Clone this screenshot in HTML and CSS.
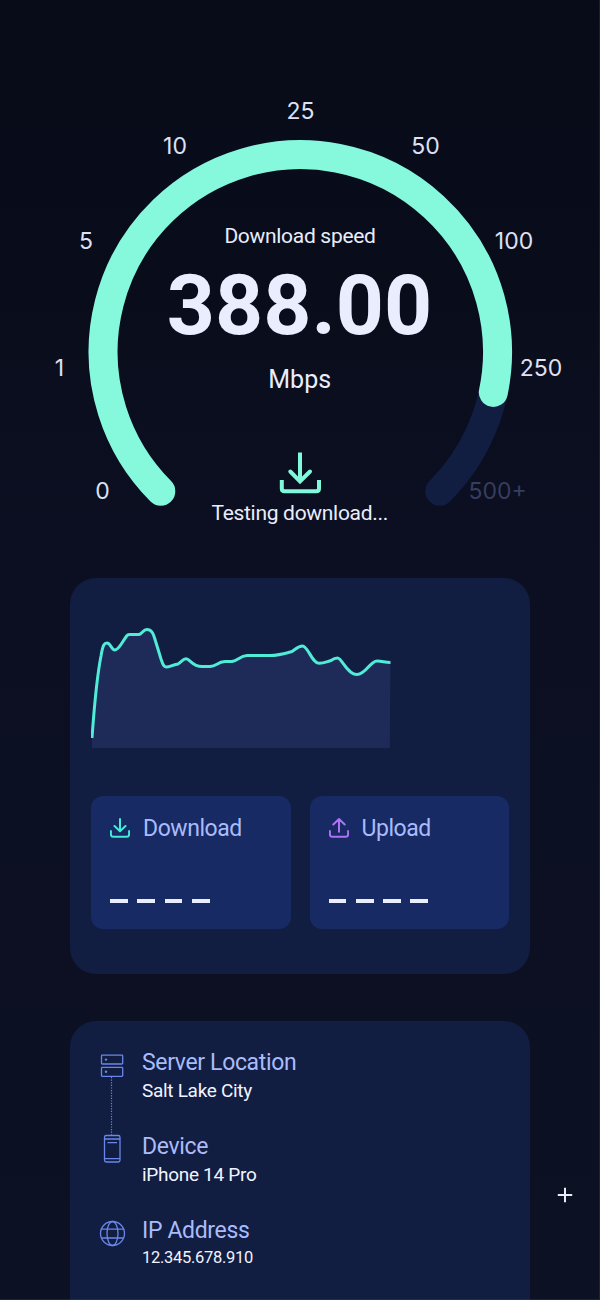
FILE: index.html
```html
<!DOCTYPE html>
<html lang="en">
<head>
<meta charset="utf-8">
<title>Speed test</title>
<link rel="stylesheet" href="styles.css">
</head>
<body>
<main class="screen">
  <svg class="gauge" width="600" height="578" viewBox="0 0 600 578">
    <path class="arc track" d="M160.8 491.2A197.2 197.2 0 1 1 439.8 491.2"/>
    <path class="arc value" d="M160.8 491.2A197.2 197.2 0 1 1 493.3 392.4"/>
    <g class="ticks">
      <text x="102.5" y="498.5">0</text>
      <text x="59.5" y="375.8">1</text>
      <text x="86" y="248.7">5</text>
      <text x="175" y="153.8">10</text>
      <text x="300.5" y="119">25</text>
      <text x="425.5" y="153.8">50</text>
      <text x="514" y="248.7">100</text>
      <text x="541" y="375.8">250</text>
      <text class="off" x="497.7" y="498.5">500+</text>
    </g>
    <text class="caption" x="300" y="242.5">Download speed</text>
    <text class="speed" x="299.5" y="334.2">388.00</text>
    <text class="unit" x="299.7" y="387.8">Mbps</text>
    <g class="gauge-icon">
      <path d="M300 452.5V482M281.8 480V488.5Q281.8 491.3 284.6 491.3H316.2Q319 491.3 319 488.5V480"/>
      <path class="head" d="M290.300 471.500L300 481.500L310 471.500"/>
    </g>
    <text class="caption" x="299.7" y="520.3">Testing download...</text>
  </svg>

  <section class="card results">
    <svg class="chart" width="418" height="170" viewBox="91 578 418 170">
      <path class="area" d="M92 748V737C94 710 97 676 101 656C103 644 104.5 643 107 643C111 643 111 650 115 650C119 650 122 642 127 635.500Q128 634.500 130 634.500H139C142 634 143 629.500 147 629.500C151 629.500 153 632 155.500 641L161 659C163 665 164 667 166 667C170 667 171 665.500 178 664C181 662.500 183 658.700 186 658.700C190 658.700 192 666.600 202 666.600H210C217 666 217 662 225 661.500H232C238 660.500 240 655.800 247 655.600H270C278 655.600 285 653.500 292 651.500C296 649 298 646 302.500 646C308 646 312 663.300 319 663.300C324 663.300 326 662 331 660.500C333 659 334.500 658 337.500 658C342 658 347 674.500 357 674.500C366 674.500 370 661 377 661C383 661 384 662.500 390.500 662.500L389.800 748Z"/>
      <path class="line" d="M92 738C94 710 97 676 101 656C103 644 104.500 643 107 643C111 643 111 650 115 650C119 650 122 642 127 635.500Q128 634.500 130 634.500H139C142 634 143 629.500 147 629.500C151 629.500 153 632 155.500 641L161 659C163 665 164 667 166 667C170 667 171 665.500 178 664C181 662.500 183 658.700 186 658.700C190 658.700 192 666.600 202 666.600H210C217 666 217 662 225 661.500H232C238 660.500 240 655.800 247 655.600H270C278 655.600 285 653.500 292 651.500C296 649 298 646 302.500 646C308 646 312 663.300 319 663.300C324 663.300 326 662 331 660.500C333 659 334.500 658 337.500 658C342 658 347 674.500 357 674.500C366 674.500 370 661 377 661C383 661 384 662.500 390.500 662.500"/>
    </svg>
    <div class="tiles">
      <div class="tile">
        <div class="tile-head">
          <svg class="tile-icon down" width="20" height="20" viewBox="0 0 20 20"><path d="M10 1V12.500M4.500 8L10 13.300L15.500 8M.9 13V16.500Q.9 18.800 3.200 18.800H16.800Q19.100 18.800 19.100 16.500V13"/></svg>
          <span>Download</span>
        </div>
        <div class="dashes"><i></i><i></i><i></i><i></i></div>
      </div>
      <div class="tile">
        <div class="tile-head">
          <svg class="tile-icon up" width="20" height="20" viewBox="0 0 20 20"><path d="M10 13.800V1.500M4.300 6.500L10 1.100L15.700 6.500M.9 13V16.500Q.9 18.800 3.200 18.800H16.800Q19.100 18.800 19.100 16.500V13"/></svg>
          <span>Upload</span>
        </div>
        <div class="dashes"><i></i><i></i><i></i><i></i></div>
      </div>
    </div>
  </section>

  <section class="card details">
    <svg class="detail-icons" width="28" height="200" viewBox="98 1050 28 200">
      <rect x="101.500" y="1055.200" width="21.200" height="8.800" rx=".8"/>
      <rect x="101.500" y="1067.300" width="21.200" height="9" rx=".8"/>
      <circle class="dot" cx="106" cy="1059.600" r="1.200"/>
      <circle class="dot" cx="106" cy="1071.700" r="1.200"/>
      <path class="link" d="M111.500 1077V1135"/>
      <rect x="104.500" y="1135.500" width="15.500" height="26.500" rx="1.800"/>
      <path d="M104.500 1139H120M104.500 1158.700H120M107.500 1142.600H117"/>
      <circle cx="112.500" cy="1233.500" r="12"/>
      <ellipse cx="112.500" cy="1233.500" rx="5.500" ry="12"/>
      <path d="M101.500 1229.200H123.500M101.500 1238H123.500"/>
    </svg>
    <dl class="detail-list">
      <div><dt>Server Location</dt><dd>Salt Lake City</dd></div>
      <div><dt>Device</dt><dd>iPhone 14 Pro</dd></div>
      <div><dt>IP Address</dt><dd class="ip">12.345.678.910</dd></div>
    </dl>
  </section>
  <svg class="plus" width="16" height="16" viewBox="0 0 16 16"><path d="M8 .8V15.200M.8 8H15.200"/></svg>
</main>
</body>
</html>
```
FILE: styles.css
```css
* { box-sizing: border-box; }
body { margin: 0; font-family: Roboto, sans-serif; }
.screen {
  position: relative;
  width: 600px;
  height: 1300px;
  overflow: hidden;
  background: linear-gradient(#080c19 0, #090d1b 300px, #0b0f21 520px, #0d1124 1300px);
}
.screen::after {
  content: "";
  position: absolute;
  inset: 0;
  border: solid rgba(255, 255, 255, .08);
  border-width: 0 1px 1px 0;
}
.gauge { display: block; }
.gauge text { text-anchor: middle; fill: #e9edfd; }
.arc { fill: none; stroke-width: 29; stroke-linecap: round; }
.track { stroke: #111d41; }
.value { stroke: #86f8dc; }
.gauge .ticks text { font-family: Inter, sans-serif; font-size: 23px; fill: #dde1f3; }
.gauge .ticks .off { fill: #363d5e; }
.gauge .caption { font-size: 21px; letter-spacing: -.3px; }
.gauge .speed { font-size: 84px; font-weight: 700; }
.gauge .unit { font-size: 25px; }
.gauge-icon { fill: none; stroke: #80f8dc; stroke-width: 4; }
.gauge-icon .head { stroke-linecap: round; }

.card { width: 460px; margin-left: 70px; background: #111d41; border-radius: 26px; }
.results { height: 396px; padding: 0 21px; }
.chart { display: block; }
.area { fill: #1e2a57; }
.line { fill: none; stroke: #50ecd7; stroke-width: 3; stroke-linejoin: round; }
.tiles { display: grid; grid-template-columns: 1fr 1fr; gap: 19px; margin-top: 48px; }
.tile { height: 132.500px; padding: 18px 19px; border-radius: 12px; background: #172a64; }
.tile-head { display: flex; align-items: center; gap: 13px; height: 28px; font-size: 23px; letter-spacing: -.45px; color: #a9bbfb; }
.tile-icon { fill: none; stroke-width: 2; stroke-linecap: round; stroke-linejoin: round; }
.down { stroke: #42ebd4; }
.up { stroke: #ae72f6; }
.dashes { display: flex; gap: 9.500px; margin-top: 56.500px; }
.dashes i { width: 17.800px; height: 4px; background: #e9edfd; }

.details { display: flex; height: 279px; margin-top: 47px; padding: 29px 28px 0; border-radius: 26px 26px 0 0; }
.detail-icons { flex: none; fill: none; stroke: #6987e8; stroke-width: 1.300; }
.dot { fill: #6987e8; stroke: none; }
.link { stroke-width: 1.200; stroke-dasharray: 1.200 1.400; }
.detail-list { display: flex; flex-direction: column; gap: 28px; margin: -3px 0 0 16px; white-space: nowrap; }
dt { height: 32px; font-size: 23px; line-height: 32px; letter-spacing: -.35px; color: #a9bbfb; }
dd { height: 24px; margin: 0; font-size: 19px; line-height: 24px; letter-spacing: -.3px; color: #f1f4ff; }
.ip { font-size: 16.500px; line-height: 21px; }
.plus { position: absolute; left: 556.500px; top: 1187px; fill: none; stroke: #e9ebf8; stroke-width: 2; }
```
